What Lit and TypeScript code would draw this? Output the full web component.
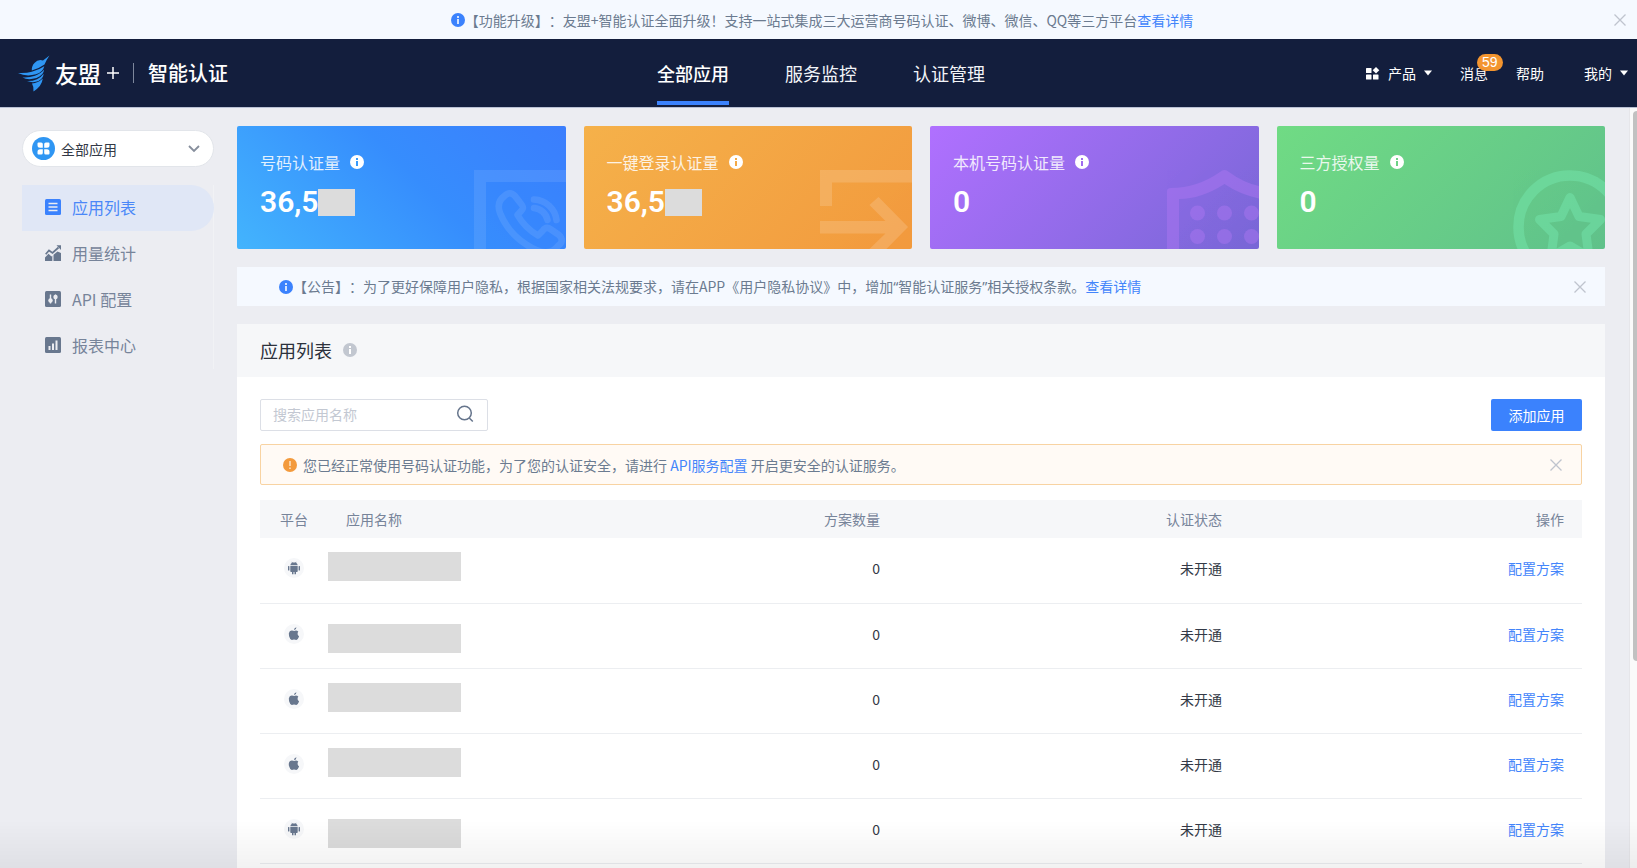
import { LitElement, html, css, svg } from "lit";
import { customElement, property, state } from "lit/decorators.js";
import { classMap } from "lit/directives/class-map.js";

const infoIcon = html`<svg class="info" viewBox="0 0 14 14" width="14" height="14" aria-hidden="true">
  <circle cx="7" cy="7" r="7" fill="currentColor"></circle>
  <rect class="mark" x="6" y="3" width="2" height="2"></rect>
  <rect class="mark" x="6" y="6" width="2" height="5"></rect>
</svg>`;

const closeIcon = html`<svg viewBox="0 0 12 12" width="12" height="12" aria-hidden="true">
  <path d="M.5.5l11 11M11.5.5l-11 11" stroke="#bfc4ce" stroke-width="1.3" fill="none"></path>
</svg>`;

const caretIcon = html`<svg viewBox="0 0 8 6" width="8" height="6" aria-hidden="true">
  <path d="M0 .5h8L4 5.5z" fill="#fff"></path>
</svg>`;

const birdLogo = html`<svg viewBox="0 0 32 37" width="32" height="37" aria-hidden="true">
  <g fill="#2f96f3">
    <path d="M31.5.5 25 5.5Q20 4 16.5 8Q13.5 11 13.8 15.5Q21 13.5 26.5 9.5Q28 5.5 31.5.5Z"></path>
    <path d="M0 18Q8 18.5 13.8 16.8Q21 14.8 26.3 11.2Q25 17 18 19.3Q8 22 0 18Z"></path>
    <path d="M4.5 22.5Q11 23 17 20.8Q23 18.5 26 14.5Q26 20 18.5 23Q10 25.5 4.5 22.5Z"></path>
    <path d="M9 26Q14 26.3 19 24.2Q23.5 22 25.6 18.8Q25.5 23 20.5 26Q15 28.3 9 26Z"></path>
    <path d="M14 28.5Q20 28 24.8 23.5Q24 31 15.5 36.5Q16 32 14 28.5Z"></path>
  </g>
</svg>`;

const sideIcons: Record<string, unknown> = {
  list: svg`<rect width="16" height="16" rx="1.5" fill="currentColor"/>
    <path d="M3.5 4.5h9M3.5 8h9M3.5 11.5h9" class="cut"/>`,
  usage: svg`<path d="M0 16v-3.5L3.5 8.8l3 2.7.8-.8V16zM8.5 16V9.8l4-3.3L16 8v8z" fill="currentColor"/>
    <path d="M.7 9.3 4 5.5 7.5 8l6-5.5" fill="none" stroke="currentColor" stroke-width="1.7"/>
    <path d="M11.5.3H16V5z" fill="currentColor"/>`,
  api: svg`<rect width="16" height="16" rx="1.5" fill="currentColor"/>
    <path d="M5.5 3.5v9M10.5 3.5v9" class="cut"/>
    <circle cx="5.5" cy="9.5" r="2.2" class="dot"/><circle cx="10.5" cy="6" r="2.2" class="dot"/>`,
  report: svg`<rect width="16" height="16" rx="1.5" fill="currentColor"/>
    <path d="M4.5 9v4M8 6.5V13M11.5 3.5V13" class="cut wide"/>`,
};

const cardArt: Record<string, unknown> = {
  phone: svg`<path d="M0 0h92v12H12v67H0z" fill="#fff"/>
    <g fill="none" stroke="#fff" stroke-width="6.5" stroke-linecap="round" stroke-linejoin="round">
      <path d="M43.5 45C50 38 50.5 38 46 32.5L41 26Q36 20.5 30.5 26Q22 32 26 43Q34 63 53 75Q74 89 84 76Q91 71 85 65L77 59.5Q72 56 68.5 61L64 65.5Q51 58 43.5 45Z"/>
      <path d="M60 29.5A23.5 23.5 0 0 1 82.5 50M60 38A15 15 0 0 1 73.5 50"/>
    </g>`,
  arrow: svg`<path d="M0 0h92v12.5H12V36H0zM0 51h65.5L49.5 35l9-8L88 57 58.5 87l-9-8 16-15.5H0z" fill="#fff"/>`,
  shield: svg`<path d="M0 79V21q0-3 4-3Q30 18 53 2q4.5-4 9 0Q77 13 92 16v12.5Q72 24 57.5 14 34 29 12 29v50z" fill="#b478f5"/>
    ${[43, 66.5].map((y) => [30.5, 57.5, 84.5].map((x) => svg`<circle cx=${x} cy=${y} r="7.5" fill="#b478f5"/>`))}`,
  star: svg`<circle cx="57" cy="57" r="51.5" fill="none" stroke="#78edb5" stroke-width="10.5"/>
    <path d="M57 27.5 66 46.5 87.5 49.5 73 64 76 87 57 76 38 87 41 64 26.5 49.5 48 46.5Z" fill="none" stroke="#78edb5" stroke-width="9" stroke-linejoin="round"/>`,
};

const androidIcon = svg`<path d="M6.3 8h7.400v5.200q0 .8-.8.8H12v2.200h-1.500V14h-1v2.200H8V14h-.9q-.8 0-.8-.8zM4 8.200q.7-.6 1.400 0v4q-.7.6-1.400 0zM14.600 8.200q.7-.6 1.400 0v4q-.7.6-1.400 0zM6.300 7.300Q6.500 5.500 8 4.800L7.500 4l.5-.2.6.8h2.800l.6-.8.5.2-.5.8Q13.500 5.500 13.700 7.300z"/>`;
const appleIcon = svg`<path d="M14.300 7.600Q12.500 6 10.300 7 7.500 6 5.800 7.200 4.300 8.800 5 12q.8 3.400 2.800 4 1.200-.2 2.200-.5 1.200.4 2.400.5 1.700-.6 2.700-3.400-2.600-2.200-.8-5zM10 6.200q0-2.300 2.400-3 .1 2.600-2.400 3z"/>`;

const fontStack = css`"Noto Sans CJK SC", "Noto Sans", sans-serif`;

@customElement("stat-card")
class StatCard extends LitElement {
  @property() tone = "blue";
  @property() label = "";
  @property() value = "";
  @property() art = "phone";
  @property({ type: Boolean }) masked = false;

  static styles = css`
    :host { display: block; font-family: ${fontStack}; }
    .card {
      position: relative; overflow: hidden; box-sizing: border-box;
      height: 123px; padding: 24px 23px 0; border-radius: 2px; color: #fff;
    }
    .blue { background: linear-gradient(45deg, #43b4fd, #368dfd 55%, #3b7efd); }
    .orange { background: linear-gradient(135deg, #f5b14a, #f29a3e); }
    .purple { background: linear-gradient(135deg, #b070ff, #7867d6); }
    .green { background: linear-gradient(135deg, #70db84, #60c18b); }
    .title { display: flex; align-items: center; gap: 10px; font-size: 16px; line-height: 24px; }
    .title span { opacity: .85; }
    .blue .mark { fill: #379afd; }
    .orange .mark { fill: #f4a945; }
    .purple .mark { fill: #a06bf0; }
    .green .mark { fill: #6cd386; }
    .value { display: flex; align-items: center; margin-top: 10px; font: 600 30px/36px Roboto, ${fontStack}; }
    .mask { width: 37px; height: 27px; background: #dcdcdc; }
    .art { position: absolute; right: 0; bottom: 0; opacity: .09; }
    .orange .art { opacity: .15; }
    .purple .art, .green .art { opacity: .4; }
  `;

  render() {
    return html`<section class="card ${this.tone}">
      <svg class="art" viewBox="0 0 92 79" width="92" height="79" aria-hidden="true">${cardArt[this.art]}</svg>
      <div class="title"><span>${this.label}</span>${infoIcon}</div>
      <div class="value">${this.value}${this.masked ? html`<i class="mask"></i>` : ""}</div>
    </section>`;
  }
}

@customElement("app-root")
class AppRoot extends LitElement {
  @state() private active = "list";

  private menu = [
    { id: "list", label: "应用列表" },
    { id: "usage", label: "用量统计" },
    { id: "api", label: "API 配置" },
    { id: "report", label: "报表中心" },
  ];

  private cards = [
    { tone: "blue", label: "号码认证量", value: "36,5", masked: true, art: "phone" },
    { tone: "orange", label: "一键登录认证量", value: "36,5", masked: true, art: "arrow" },
    { tone: "purple", label: "本机号码认证量", value: "0", masked: false, art: "shield" },
    { tone: "green", label: "三方授权量", value: "0", masked: false, art: "star" },
  ];

  private apps = [
    { os: "android", low: false },
    { os: "apple", low: true },
    { os: "apple", low: false },
    { os: "apple", low: false },
    { os: "android", low: true },
  ];

  static styles = css`
    :host {
      display: flex; flex-direction: column; height: 100vh; overflow: hidden;
      background: #ecedf2; color: #333946;
      font-family: ${fontStack}; font-size: 14px; line-height: 20px;
      text-spacing-trim: space-all;
    }
    * { box-sizing: border-box; }
    a { color: #4385fb; text-decoration: none; }
    button { padding: 0; border: 0; background: none; font: inherit; cursor: pointer; }
    svg { display: block; flex: none; }
    .info { color: #3b82fd; }
    .info .mark { fill: #d3e4ff; }
    .quote { font-family: "Noto Sans", sans-serif; }

    .notice { display: flex; align-items: center; height: 39px; color: #6b7b90; background: #f5f9ff; white-space: nowrap; }
    .notice.top { flex: none; padding: 0 11px 0 30px; }
    .notice.top .text { display: flex; align-items: center; margin: 0 auto; }
    .notice.inner { flex: none; margin: 18px 0; padding: 0 19px 0 42px; }
    .notice .close { margin-left: auto; }
    .notice.top .close { margin-left: 0; }

    .header {
      display: grid; grid-template-columns: 1fr auto 1fr; flex: none;
      height: 68px; padding: 0 9px 0 14px; background: #131e3d; color: #fff;
    }
    .brand { display: flex; align-items: center; padding-left: 4px; }
    .name { margin-left: 5px; font-size: 23px; line-height: 32px; font-weight: 500; }
    .plus { margin-left: 6px; }
    .divider { width: 1px; height: 20px; margin: 0 14px; background: #7d879c; }
    .product { font-size: 20px; line-height: 30px; font-weight: 500; }
    .tabs { display: flex; gap: 56px; font-size: 18px; }
    .tabs a { display: flex; align-items: center; height: 66px; padding-top: 6px; color: #f2f4f8; border-bottom: 4px solid transparent; }
    .tabs a.on { font-weight: 500; color: #fff; border-color: #3b82fd; }
    .tools { display: flex; align-items: center; justify-content: flex-end; }
    .tools a { display: flex; align-items: center; gap: 8px; color: #fff; margin-left: 28px; }
    .tools .mine { margin-left: 40px; }
    .msg { position: relative; }
    .badge {
      position: absolute; left: 17px; top: -9px; padding: 0 5px; border-radius: 9px;
      background: #f3952f; font: 14px/17px "Liberation Sans", sans-serif;
    }

    .body { display: flex; flex: 1; min-height: 0; border-top: 1px solid #b9c0d4; }
    .side { flex: none; width: 214px; padding: 22px 0 0 22px; }
    .picker { display: flex; align-items: center; height: 37px; padding: 0 13px 0 9px; border: 1px solid #e2e5ea; border-radius: 19px; background: #fff; }
    .picker select { flex: 1; margin-left: 6px; border: 0; padding: 0; background: none; appearance: none; font: inherit; color: #333946; outline: none; }
    .menu { margin-top: 18px; border-right: 1px solid #f1f2f5; }
    .menu a { display: flex; align-items: center; gap: 11px; height: 46px; padding: 0 0 2px 23px; font-size: 16px; color: #77849a; }
    .menu svg { color: #68778e; }
    .menu .on { margin-right: -1px; border-radius: 0 23px 23px 0; background: #e0e7f6; color: #4a87f8; }
    .menu .on svg { color: #3b82fd; }
    .cut { fill: none; stroke: #ecedf2; stroke-width: 1.4; }
    .cut.wide { stroke-width: 2; }
    .dot { fill: #ecedf2; }

    .main { display: flex; flex-direction: column; flex: 1; min-width: 0; overflow: hidden; padding: 18px 24px 0 23px; }
    .cards { display: grid; grid-template-columns: repeat(4, 1fr); gap: 18px; flex: none; }
    .panel { flex: 1 0 auto; background: #fff; }
    .head { display: flex; align-items: center; gap: 11px; height: 53px; padding: 0 23px 2px; background: #f6f7f9; }
    h1 { margin: 0; font-size: 18px; line-height: 26px; font-weight: 400; color: #2c313c; }
    .head .info { color: #c2c7d0; }
    .head .mark { fill: #fff; }
    .content { padding: 22px 23px 0; }
    .bar { display: flex; align-items: center; justify-content: space-between; }
    .search { display: flex; align-items: center; width: 228px; height: 32px; padding: 0 13px 2px 12px; border: 1px solid #dcdfe6; border-radius: 2px; }
    .search input { flex: 1; min-width: 0; border: 0; padding: 0; outline: none; background: none; font: inherit; }
    .search input::placeholder { color: #c3c8d2; opacity: 1; }
    .add { width: 91px; height: 32px; border-radius: 2px; background: #3b82fd; color: #fff; }
    .alert {
      display: flex; align-items: center; gap: 6px; height: 41px; margin: 13px 0 15px; padding: 0 19px 0 22px;
      border: 1px solid #f8d3a2; border-radius: 2px; background: #fffaf5; color: #6b7b90;
    }
    .alert .close { margin-left: auto; }

    table { width: 100%; border-collapse: collapse; table-layout: fixed; }
    th { height: 38px; padding: 0 18px; background: #f6f7f9; color: #77849a; font-weight: 400; text-align: right; }
    th.left { text-align: left; }
    th.os { width: 68px; padding-left: 20px; padding-right: 0; }
    th.fixed { width: 342px; }
    td { height: 65px; padding: 0 18px 4px; border-bottom: 1px solid #eceef1; text-align: right; }
    td.os { padding: 0 0 4px 24px; }
    td.app { padding: 14px 0 0; vertical-align: top; }
    td.app.low { padding-top: 20px; }
    .mask { display: block; width: 133px; height: 29px; background: #dcdcdc; }
    .os svg { border-radius: 50%; background: #f6f7f9; fill: #68778e; }

    .scroll { flex: none; width: 8px; padding: 3px 0 3px 3px; border-left: 1px solid #e6e6ea; background: #fafafa; }
    .thumb { height: 73%; border-radius: 4px 0 0 4px; background: #c1c1c1; }
    .fade { position: fixed; left: 0; right: 0; bottom: 0; height: 48px; pointer-events: none; background: linear-gradient(rgba(0, 0, 0, 0), rgba(0, 0, 0, .05)); }
  `;

  render() {
    return html`
      <div class="notice top">
        <div class="text">${infoIcon}<span>【功能升级】：友盟+智能认证全面升级！支持一站式集成三大运营商号码认证、微博、微信、QQ等三方平台<a href="#">查看详情</a></span></div>
        <button class="close" aria-label="关闭">${closeIcon}</button>
      </div>
      <header class="header">
        <div class="brand">
          ${birdLogo}<span class="name">友盟</span>
          <svg class="plus" viewBox="0 0 12 12" width="12" height="12" aria-hidden="true"><path d="M6 0v12M0 6h12" stroke="#fff" stroke-width="1.5"></path></svg>
          <i class="divider"></i><span class="product">智能认证</span>
        </div>
        <nav class="tabs">
          <a class="on" href="#">全部应用</a><a href="#">服务监控</a><a href="#">认证管理</a>
        </nav>
        <div class="tools">
          <a href="#"><svg viewBox="0 0 14 13" width="14" height="13" aria-hidden="true"><g fill="#fff"><rect x="0" y="1" width="5.5" height="5" rx=".6"></rect><rect x="0" y="7.5" width="5.5" height="5" rx=".6"></rect><rect x="7" y="7.5" width="5.5" height="5" rx=".6"></rect><path d="M10 0l3.3 3.3L10 6.6 6.7 3.3z"></path></g></svg>产品${caretIcon}</a>
          <a class="msg" href="#">消息<span class="badge">59</span></a>
          <a href="#">帮助</a>
          <a class="mine" href="#">我的${caretIcon}</a>
        </div>
      </header>
      <div class="body">
        <aside class="side">
          <label class="picker">
            <svg viewBox="0 0 23 23" width="23" height="23" aria-hidden="true">
              <circle cx="11.5" cy="11.5" r="11.5" fill="#2f96f3"></circle>
              <path fill="#fff" d="M6.500 5.500h2.700q1.600 0 1.600 1.600v3.700H8q-2.500 0-2.500-2.500V6.500q0-1 1-1zM16.500 5.500h-2.700q-1.600 0-1.600 1.600v3.700H15q2.500 0 2.500-2.500V6.500q0-1-1-1zM6.500 17.500h2.700q1.600 0 1.600-1.600v-3.700H8q-2.500 0-2.500 2.500v1.800q0 1 1 1zM16.500 17.500h-2.700q-1.600 0-1.600-1.600v-3.700H15q2.500 0 2.500 2.500v1.800q0 1-1 1z"></path>
            </svg>
            <select aria-label="应用"><option>全部应用</option></select>
            <svg viewBox="0 0 12 8" width="12" height="8" aria-hidden="true"><path d="M1 1l5 5 5-5" fill="none" stroke="#868e9c" stroke-width="1.8"></path></svg>
          </label>
          <nav class="menu">
            ${this.menu.map((m) => html`<a href="#" class=${classMap({ on: m.id === this.active })} @click=${() => (this.active = m.id)}>
              <svg viewBox="0 0 16 16" width="16" height="16" aria-hidden="true">${sideIcons[m.id]}</svg>${m.label}</a>`)}
          </nav>
        </aside>
        <main class="main">
          <div class="cards">
            ${this.cards.map((c) => html`<stat-card .tone=${c.tone} .label=${c.label} .value=${c.value} .art=${c.art} .masked=${c.masked}></stat-card>`)}
          </div>
          <div class="notice inner">
            ${infoIcon}<span>【公告】：为了更好保障用户隐私，根据国家相关法规要求，请在APP《用户隐私协议》中，增加<span class="quote">“</span>智能认证服务<span class="quote">”</span>相关授权条款。<a href="#">查看详情</a></span>
            <button class="close" aria-label="关闭">${closeIcon}</button>
          </div>
          <section class="panel">
            <div class="head"><h1>应用列表</h1>${infoIcon}</div>
            <div class="content">
              <div class="bar">
                <label class="search">
                  <input type="text" placeholder="搜索应用名称" aria-label="搜索应用名称" />
                  <svg viewBox="0 0 18 18" width="18" height="18" aria-hidden="true"><circle cx="8.5" cy="8" r="6.8" fill="none" stroke="#66758c" stroke-width="1.5"></circle><path d="M13.3 13l3.5 3.5" stroke="#66758c" stroke-width="1.5"></path></svg>
                </label>
                <button class="add">添加应用</button>
              </div>
              <div class="alert" role="alert">
                <svg viewBox="0 0 14 14" width="14" height="14" aria-hidden="true"><circle cx="7" cy="7" r="7" fill="#f39a3c"></circle><path d="M7 3v5M7 9.5v1.5" stroke="#fde3c4" stroke-width="1.5"></path></svg>
                <span>您已经正常使用号码认证功能，为了您的认证安全，请进行 <a href="#">API服务配置</a> 开启更安全的认证服务。</span>
                <button class="close" aria-label="关闭">${closeIcon}</button>
              </div>
              <table>
                <thead><tr>
                  <th class="left os">平台</th><th class="left">应用名称</th><th>方案数量</th><th class="fixed">认证状态</th><th class="fixed">操作</th>
                </tr></thead>
                <tbody>
                  ${this.apps.map((a) => html`<tr>
                    <td class="os"><svg viewBox="0 0 20 20" width="20" height="20" role="img" aria-label=${a.os}>${a.os === "android" ? androidIcon : appleIcon}</svg></td>
                    <td class=${classMap({ app: true, low: a.low })}><span class="mask"></span></td>
                    <td>0</td><td>未开通</td><td><a href="#">配置方案</a></td>
                  </tr>`)}
                </tbody>
              </table>
            </div>
          </section>
        </main>
        <div class="scroll" aria-hidden="true"><div class="thumb"></div></div>
      </div>
      <div class="fade"></div>
    `;
  }
}
